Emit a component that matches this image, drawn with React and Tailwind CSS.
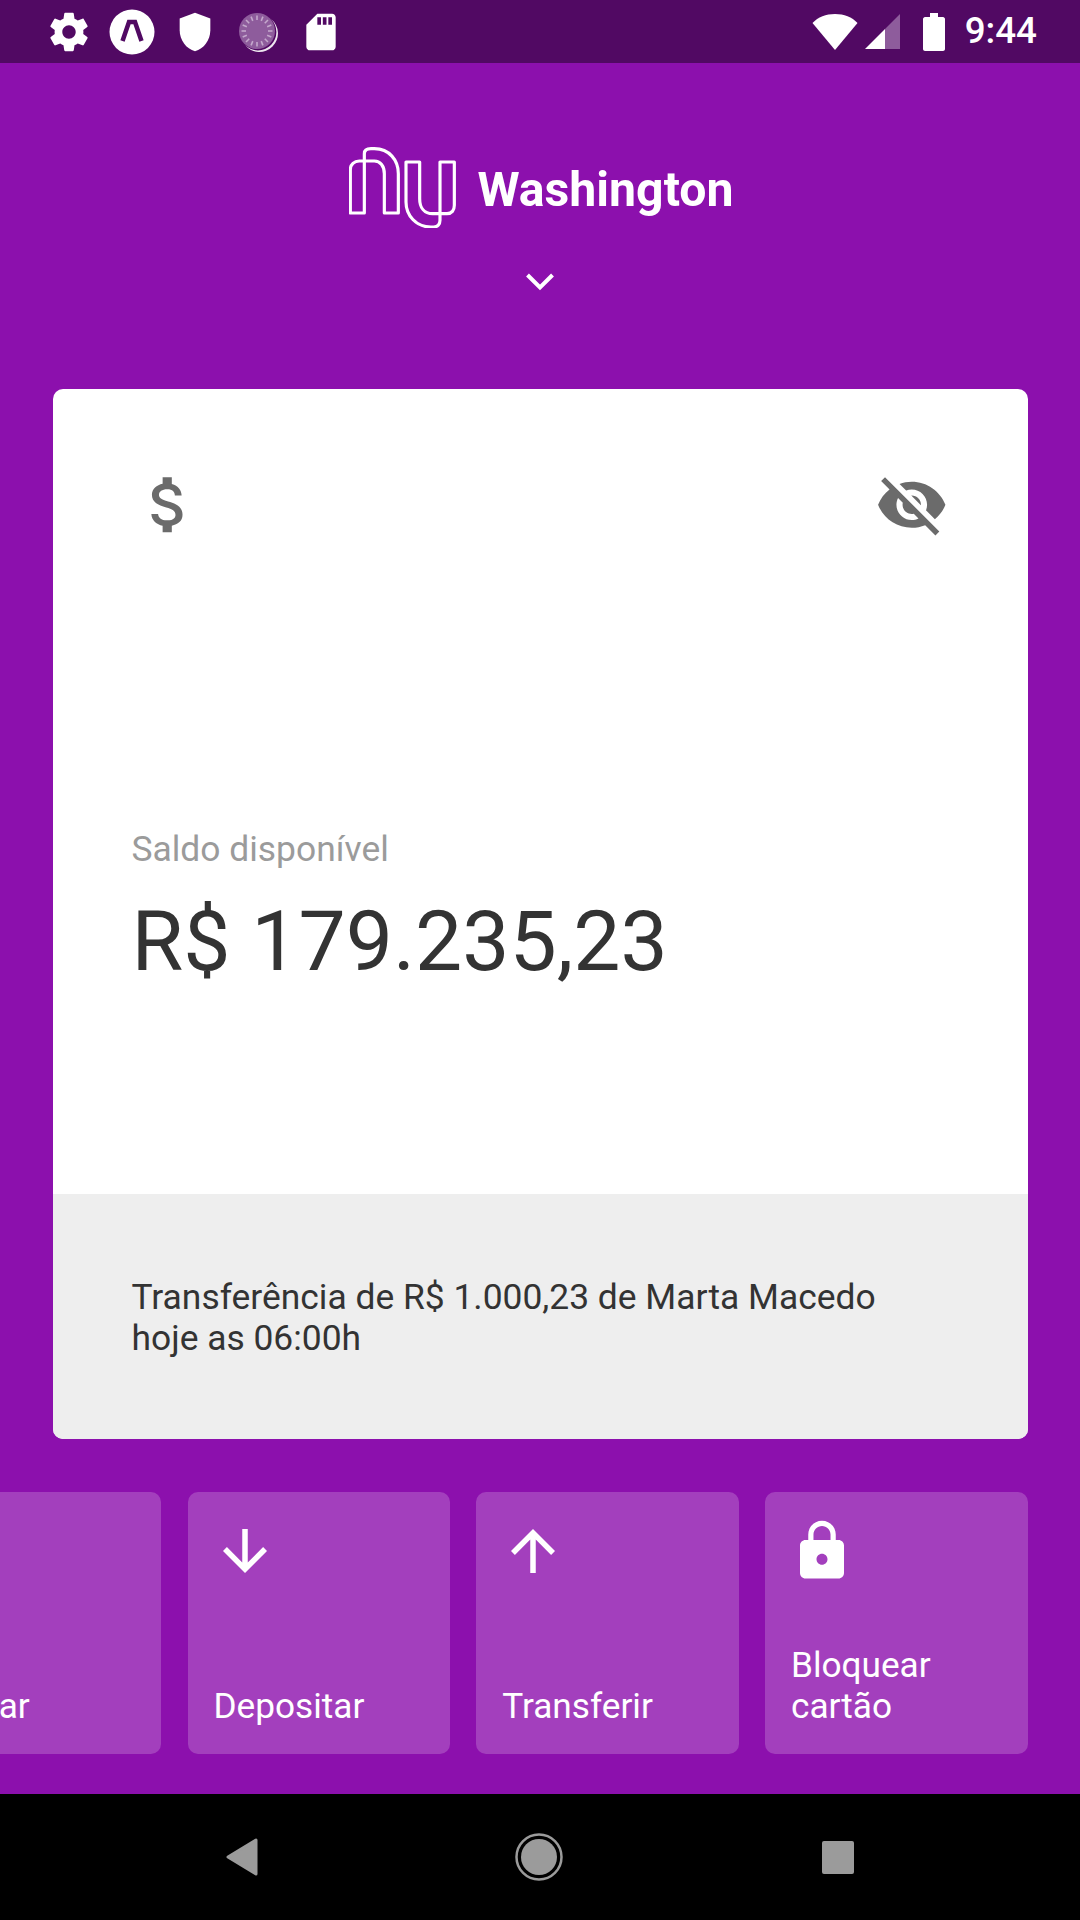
const Glyph = ({ d, size = 66, className = '', fill = 'currentColor' }) => (
  <svg width={size} height={size} viewBox="0 0 24 24" fill={fill} className={className}>
    <path d={d} />
  </svg>
);

const ICONS = {
  gear: 'M19.43 12.98c.04-.32.07-.64.07-.98s-.03-.66-.07-.98l2.11-1.65c.19-.15.24-.42.12-.64l-2-3.46c-.12-.22-.39-.3-.61-.22l-2.49 1c-.52-.4-1.08-.73-1.69-.98l-.38-2.65C14.46 2.18 14.25 2 14 2h-4c-.25 0-.46.18-.49.42l-.38 2.65c-.61.25-1.17.59-1.69.98l-2.49-1c-.23-.09-.49 0-.61.22l-2 3.46c-.13.22-.07.49.12.64l2.11 1.65c-.04.32-.07.65-.07.98s.03.66.07.98l-2.11 1.65c-.19.15-.24.42-.12.64l2 3.46c.12.22.39.3.61.22l2.49-1c.52.4 1.08.73 1.69.98l.38 2.65c.03.24.24.42.49.42h4c.25 0 .46-.18.49-.42l.38-2.65c.61-.25 1.17-.59 1.69-.98l2.49 1c.23.09.49 0 .61-.22l2-3.46c.12-.22.07-.49-.12-.64l-2.11-1.65zM12 15.5c-1.93 0-3.5-1.57-3.5-3.5s1.57-3.5 3.5-3.5 3.5 1.57 3.5 3.5-1.57 3.5-3.5 3.5z',
  shield: 'M12 2L4 5v6.09c0 5.05 3.41 9.76 8 10.91 4.59-1.15 8-5.86 8-10.91V5l-8-3z',
  sd: 'M18 2h-8L4 8v12c0 1.1.9 2 2 2h12c1.1 0 2-.9 2-2V4c0-1.1-.9-2-2-2zm-6 6h-2V4h2v4zm3 0h-2V4h2v4zm3 0h-2V4h2v4z',
  dollar: 'M11.8 10.9c-2.27-.59-3-1.2-3-2.15 0-1.09 1.01-1.85 2.7-1.85 1.78 0 2.44.85 2.5 2.1h2.21c-.07-1.72-1.12-3.3-3.21-3.81V3h-3v2.16c-1.94.42-3.5 1.68-3.5 3.61 0 2.31 1.91 3.46 4.7 4.13 2.5.6 3 1.48 3 2.41 0 .69-.49 1.79-2.7 1.79-2.06 0-2.87-.92-2.98-2.1h-2.2c.12 2.19 1.76 3.42 3.68 3.83V21h3v-2.15c1.95-.37 3.5-1.5 3.5-3.55 0-2.84-2.43-3.81-4.7-4.4z',
  eyeOff: 'M12 7c2.76 0 5 2.24 5 5 0 .65-.13 1.26-.36 1.83l2.92 2.92c1.51-1.26 2.7-2.89 3.43-4.75-1.73-4.39-6-7.5-11-7.5-1.4 0-2.74.25-3.98.7l2.16 2.16C10.74 7.13 11.35 7 12 7zM2 4.27l2.28 2.28.46.46C3.08 8.3 1.78 10.02 1 12c1.73 4.39 6 7.5 11 7.5 1.55 0 3.03-.3 4.38-.84l.42.42L19.73 22 21 20.73 3.27 3 2 4.27zM7.53 9.8l1.55 1.55c-.05.21-.08.43-.08.65 0 1.66 1.34 3 3 3 .22 0 .44-.03.65-.08l1.55 1.55c-.67.33-1.41.53-2.2.53-2.76 0-5-2.24-5-5 0-.79.2-1.53.53-2.2zm4.31-.78l3.15 3.15.02-.16c0-1.66-1.34-3-3-3l-.17.01z',
  down: 'M20 12l-1.41-1.41L13 16.17V4h-2v12.17l-5.58-5.59L4 12l8 8 8-8z',
  up: 'M4 12l1.41 1.41L11 7.83V20h2V7.83l5.58 5.59L20 12l-8-8-8 8z',
  lock: 'M18 8h-1V6c0-2.76-2.24-5-5-5S7 3.24 7 6v2H6c-1.1 0-2 .9-2 2v10c0 1.1.9 2 2 2h12c1.1 0 2-.9 2-2V10c0-1.1-.9-2-2-2zm-6 9c-1.1 0-2-.9-2-2s.9-2 2-2 2 .9 2 2-.9 2-2 2zm3.1-9H8.9V6c0-1.71 1.39-3.1 3.1-3.1 1.71 0 3.1 1.39 3.1 3.1v2z',
};

const TILES = [
  { label: 'Cobrar', icon: ICONS.down },
  { label: 'Depositar', icon: ICONS.down },
  { label: 'Transferir', icon: ICONS.up },
  { label: 'Bloquear cartão', icon: ICONS.lock },
];

function AppBadge() {
  return (
    <svg width="46" height="46" viewBox="0 0 46 46">
      <circle cx="23" cy="23" r="22.5" fill="#fff" />
      <path d="M13.5 32 L20 13 H26 L32.5 32" fill="none" stroke="#510963" strokeWidth="4.5" strokeLinejoin="miter" />
    </svg>
  );
}

function SyncDial() {
  const ticks = Array.from({ length: 16 }, (_, i) => i * 22.5);
  return (
    <svg width="40" height="40" viewBox="0 0 40 40">
      <path d="M33 7 A18.5 18.5 0 1 1 7 33 A17.5 17.5 0 0 0 33 7 Z" fill="#fff" opacity="0.9" />
      <circle cx="19" cy="19" r="18" fill="#8e5c9c" />
      {ticks.map(a => (
        <line key={a} x1="19" y1="3.5" x2="19" y2="8" stroke="#c4a8cc" strokeWidth="1.6" transform={`rotate(${a} 19 19)`} />
      ))}
    </svg>
  );
}

function StatusBar() {
  return (
    <div className="h-[63px] bg-[#510963] flex items-center justify-between pl-[37px] pr-[43px] text-white">
      <div className="flex items-center">
        <div className="w-[63px] flex justify-center"><Glyph d={ICONS.gear} size={46} /></div>
        <div className="w-[63px] flex justify-center"><AppBadge /></div>
        <div className="w-[63px] flex justify-center"><Glyph d={ICONS.shield} size={46} /></div>
        <div className="w-[63px] flex justify-center"><SyncDial /></div>
        <div className="w-[63px] flex justify-center"><Glyph d={ICONS.sd} size={44} /></div>
      </div>
      <div className="flex items-center">
        <svg width="46" height="38" viewBox="0 0 46 38">
          <path d="M23 37 L0.5 10 C6 4 14 1 23 1 C32 1 40 4 45.5 10 Z" fill="#fff" strokeLinejoin="round" />
        </svg>
        <svg width="36" height="36" viewBox="0 0 36 36" className="ml-[7px]">
          <path d="M0 35 L20 15 V35 Z" fill="#fff" />
          <path d="M20 15 L35 0 V35 H20 Z" fill="#8e5c9c" />
        </svg>
        <svg width="22" height="38" viewBox="0 0 22 38" className="ml-[22px]">
          <path d="M7 0 H15 V4 H20 C21 4 22 5 22 6 V36 C22 37 21 38 20 38 H2 C1 38 0 37 0 36 V6 C0 5 1 4 2 4 H7 Z" fill="#fff" />
        </svg>
        <span className="ml-[20px] text-[36.75px] leading-none font-medium">9:44</span>
      </div>
    </div>
  );
}

function Header() {
  return (
    <div className="h-[326px] flex flex-col items-center pt-[84px]">
      <div className="flex items-center gap-[20px] pl-[3px] text-white">
        <svg width="108" height="81" viewBox="84 50 324 243" fill="none" stroke="#fff" strokeWidth="9.5" strokeLinejoin="round">
          <path d="M88 248 H130 V70 Q130 55 150 55 H160 C205 55 232 90 232 130 V248 H190 V130 C190 108 178 92 160 92 H115 C100 92 88 102 88 118 Z" />
          <path d="M255 95 H296 V205 C296 232 310 250 335 250 H378 C392 250 400 240 400 225 V95 H357 V270 C357 282 350 290 338 290 H330 C285 290 255 255 255 215 Z" />
        </svg>
        <span className="text-[48.2px] leading-none font-bold pt-[5px]">Washington</span>
      </div>
      <svg width="28" height="18" viewBox="0 0 28 18" fill="none" stroke="#fff" strokeWidth="4" className="mt-[45px]">
        <path d="M1.5 2 L14 14.5 L26.5 2" />
      </svg>
    </div>
  );
}

function BalanceCard() {
  return (
    <div className="mx-[52.5px] h-[1050px] rounded-[10px] overflow-hidden bg-white flex flex-col">
      <div className="flex-1 px-[79px] pt-[79px] flex flex-col justify-between pb-[203px]">
        <div className="flex justify-between text-[#6b6b6b]">
          <Glyph d={ICONS.dollar} size={73.5} />
          <Glyph d={ICONS.eyeOff} size={73.5} />
        </div>
        <div>
          <div className="text-[35.4px] leading-[41px] text-[#9b9b9b]">Saldo disponível</div>
          <div className="text-[84px] leading-[98px] mt-[23px] text-[#333]">R$ 179.235,23</div>
        </div>
      </div>
      <div className="h-[245px] bg-[#eeeeee] px-[79px] pt-[2px] flex items-center">
        <p className="text-[35.4px] leading-[41px] text-[#333]">
          Transferência de R$ 1.000,23 de Marta Macedo<br />hoje as 06:00h
        </p>
      </div>
    </div>
  );
}

function Tiles() {
  return (
    <div className="mt-[53px] flex justify-end gap-[26.25px] pr-[52.5px] overflow-hidden">
      {TILES.map(t => (
        <div key={t.label} className="w-[262.5px] h-[262px] shrink-0 rounded-[10px] bg-[#a33fbd] pt-[26px] px-[26px] pb-[27px] flex flex-col justify-between text-white">
          <Glyph d={t.icon} className="-ml-[2px]" />
          <div className="text-[35.2px] leading-[41px]">{t.label}</div>
        </div>
      ))}
    </div>
  );
}

function NavBar() {
  return (
    <div className="h-[126px] bg-black flex items-center justify-center">
      <div className="flex items-center">
        <svg width="34" height="40" viewBox="0 0 34 40" className="-ml-[2px]">
          <path d="M31 3 V37 L3 20 Z" fill="#9b9b9b" stroke="#9b9b9b" strokeWidth="3" strokeLinejoin="round" />
        </svg>
        <svg width="48" height="48" viewBox="0 0 48 48" className="ml-[256px]">
          <circle cx="24" cy="24" r="22.5" fill="none" stroke="#9b9b9b" strokeWidth="2.5" />
          <circle cx="24" cy="24" r="18" fill="#9b9b9b" />
        </svg>
        <div className="ml-[259px] w-[32px] h-[33px] rounded-[2px] bg-[#9b9b9b]" />
      </div>
    </div>
  );
}

export default function App() {
  return (
    <div className="w-[1080px] h-[1920px] overflow-hidden flex flex-col bg-[#8c10ad] font-['Roboto',sans-serif]">
      <StatusBar />
      <main className="flex-1 min-h-0">
        <Header />
        <BalanceCard />
        <Tiles />
      </main>
      <NavBar />
    </div>
  );
}
